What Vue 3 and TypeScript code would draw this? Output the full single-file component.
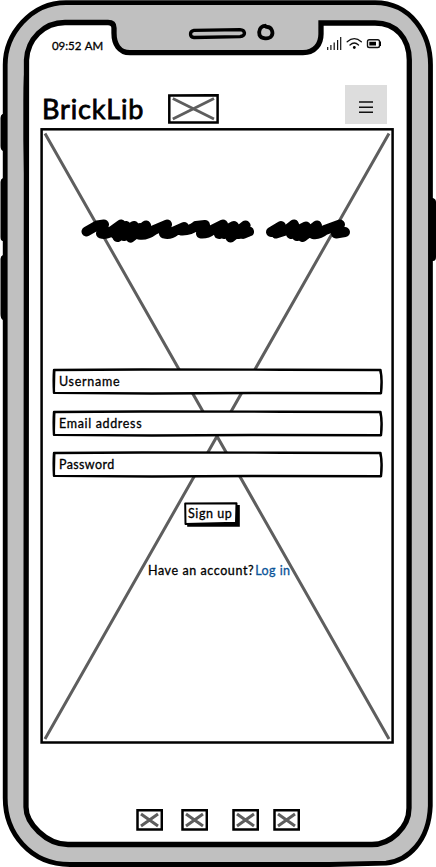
<script setup lang="ts">
interface Field {
  id: string
  label: string
}

const fields: Field[] = [
  { id: 'username', label: 'Username' },
  { id: 'email', label: 'Email address' },
  { id: 'password', label: 'Password' },
]

const tabs: string[] = ['first', 'second', 'third', 'fourth']
</script>

<template>
  <div class="phone">
    <svg class="frame" viewBox="0 0 436 867" fill="none" stroke="#000" aria-hidden="true">
      <path fill="#000" stroke="none" d="M5 114H2.500Q.5 115 .5 118V146Q.5 150 3 151H5ZM5 178H3Q.5 179 .5 182V237Q.5 241 3 241H5ZM5 255H3Q.5 256 .5 259V314Q.5 319 3 320H5ZM429 198H433Q436 199 436 202V257Q436 261 433 261H429Z" />
      <path fill="#c0c0c0" stroke-width="4.800" d="M5.200 65C5.200 34 31 2.600 66 2.600H375C411 2.600 430.500 34 430.500 65L430.300 806C429 841 408 861 386 863.200L330 864.500H70C30 864.500 5.200 833 5.200 798Z" />
      <path fill="#fff" stroke-width="5.300" d="M26.500 60C27.500 39 44 22.500 65 22.500H108Q114 22.500 114 28V33C114 44 119 52.700 130 52.700H303C315 52.700 321 44 321 34V23H375C396 23 409 38 409.300 60L409 808C409 828 390 844.500 372 844.500H68C46 844.500 26 823 26 807Z" />
      <path stroke-width="2.400" d="M26.500 58Q24.600 75 24.600 100V140L25.500 190M26 795V807Q28 820 38 830" />
      <path stroke-width="3.300" d="M194 30.300Q190.500 31 190.500 34Q190.500 37.300 194 37.500L240 36.700Q244.500 36 244.500 33Q244 30 240 29.700Z" />
      <path stroke-width="3.800" d="M265 25.800C260 26 258.500 31 259.500 35C261 39 269 39.500 271.500 36C274 32 271 27 267.500 27Q266 27 265 25.800Z" />
    </svg>

    <div class="screen">
      <div class="status">
        <span class="clock">09:52 AM</span>
        <svg class="indicators" viewBox="0 0 56 16" fill="none" stroke="#111" aria-hidden="true">
          <path stroke-width="1.200" d="M1.700 11V14M4.900 9V14M8.200 6.500V14M11.600 4V14M14.700 1V14" />
          <path stroke-width="1.300" stroke-linecap="round" d="M21.200 5.800Q28.300-.5 35.300 5.800M24 9Q28.300 5 32.500 9" />
          <circle cx="28.300" cy="11.500" r="1.400" fill="#000" stroke="none" />
          <rect x="41.500" y="3.700" width="12" height="7.800" rx="1.800" stroke-width="1.400" />
          <path fill="#000" stroke="none" d="M43.300 5.700H50V9.500H43.300ZM53.500 5.500H55V10H53.500Z" />
        </svg>
      </div>

      <header class="header">
        <h1 class="brand">BrickLib</h1>
        <svg class="logo" viewBox="0 0 51 30" aria-hidden="true">
          <path fill="#fff" stroke="#000" stroke-width="2.500" d="M1.300 1.500L49.600 1.200V28.500L1.300 28.600Z" />
          <path stroke="#5e5e5e" stroke-width="2.800" d="M4.800 4.500L46 25M46 4.500L4.800 25" />
        </svg>
        <button class="menu" type="button" aria-label="Menu">
          <svg viewBox="0 0 14 12" aria-hidden="true">
            <path stroke="#111" stroke-width="1.400" d="M0 1H14M0 6.200H14M0 11.200H14" />
          </svg>
        </button>
      </header>

      <main class="hero">
        <svg class="cross" viewBox="0 0 354 616" fill="none" aria-hidden="true">
          <path stroke="#5e5e5e" stroke-width="3" d="M5 5.500L349 611M349 5.500L5 611" />
          <rect x="1.600" y="1.300" width="351" height="613.200" stroke="#000" stroke-width="2.500" />
        </svg>
        <svg class="scribble" viewBox="80 216 272 30" fill="none" stroke="#000" stroke-width="10" stroke-linecap="round" stroke-linejoin="round" aria-hidden="true">
          <path d="M86.500 231.500L97 225.500L104 224.500L101 233.500Q106 235 112 231L121 224.500L115 234L126 226L117.500 237L134 226L124 236L140 228L130.500 237.500L146 225.500L139 234.500Q146 236 154 230L167 224.500L164 233.500Q170 235 175 231L184 227L181 230.500Q190 231 196 226L205 225L201 233.500Q207 234 212 230L223 224.500L219 234L234 226L224 234L240 229L230.500 237.500L245.500 225.500L238 234L249 231.500L243 234" />
          <path d="M271 232L281 226L276 233.500L287 230L294 224.500L291 234L306 226.500L297 236L312 230L302.500 237L317 225.500L313 234Q319 235 325 230L340 224.500L336 233.500L345 232" />
        </svg>

        <form class="form" @submit.prevent>
          <div v-for="field in fields" :key="field.id" class="field">
            <svg class="sketch" viewBox="0 0 331 27" aria-hidden="true">
              <path fill="#fff" stroke="#000" stroke-width="2.400" stroke-linejoin="round" d="M2 2L90 1.500L230 1.700L328.500 2Q330.500 12 329 25.200L200 25L100 25.500L2 24.900Q1.300 12 2 2Z" />
              <path fill="none" stroke="#000" stroke-width="1.300" d="M2.800 2L2.300 25.500M328 2.500L329.500 12.500L328.500 25.500" />
            </svg>
            <span class="label" :class="field.id">{{ field.label }}</span>
          </div>
          <button class="submit" type="submit">
            <svg class="sketch" viewBox="0 0 57 25" aria-hidden="true">
              <path d="M3.500 3H55.800V24.800H3.200Z" />
              <path fill="#fff" stroke="#000" stroke-width="2" stroke-linejoin="round" d="M1.200 1.500L52.500 1.200L52 20.800L1.500 22Z" />
            </svg>
            <span class="label">Sign up</span>
          </button>
        </form>

        <p class="login"><span class="question">Have an account?</span><a class="link">Log in</a></p>
      </main>

      <nav class="tabs">
        <svg v-for="tab in tabs" :key="tab" class="tab" :class="tab" viewBox="0 0 27 22" aria-hidden="true">
          <path fill="#fff" stroke="#000" stroke-width="2.500" d="M1.500 1.300H25.800V20.600H1.500Z" />
          <path stroke="#5e5e5e" stroke-width="3" d="M5 5L22 17M22 5L5 17" />
        </svg>
      </nav>
    </div>
  </div>
</template>

<style>
body {
  background: #fff;
}
</style>

<style scoped>
.phone {
  position: relative;
  width: 436px;
  height: 867px;
  overflow: hidden;
  color: #000;
  font-family: Lato, "Open Sans", sans-serif;
  font-size: 12.5px;
  line-height: 16px;
  letter-spacing: 0.58px;
  -webkit-text-stroke: 0.3px currentColor;
}

.frame {
  position: absolute;
  inset: 0;
  width: 436px;
  height: 867px;
}

.screen {
  position: relative;
  display: flex;
  flex-direction: column;
  height: 867px;
  box-sizing: border-box;
  padding: 36px 42px 36px 40px;
}

.status {
  display: flex;
  justify-content: space-between;
  height: 49px;
  padding: 0 12px;
}

.clock {
  margin-top: 2px;
  font-size: 11.5px;
  word-spacing: 1px;
  letter-spacing: -0.05px;
  white-space: nowrap;
}

.indicators {
  width: 56px;
  height: 16px;
}

.header {
  display: flex;
  height: 43px;
  padding-right: 7px;
}

.brand {
  width: 127px;
  margin: 8px 0 0 2px;
  font-size: 27px;
  font-weight: 400;
  line-height: 32px;
  letter-spacing: 0.85px;
  -webkit-text-stroke: 0.8px #000;
}

.logo {
  width: 51px;
  height: 30px;
  margin: 9px 0 0 -1px;
}

.menu {
  display: grid;
  place-items: center;
  width: 42px;
  height: 39px;
  margin-left: auto;
  padding: 4px 0 0;
  border: 0;
  background: #ddd;
}

.menu svg {
  width: 14px;
  height: 12px;
}

.hero {
  position: relative;
  width: 354px;
  height: 616px;
  box-sizing: border-box;
  padding: 88px 11px 0 12px;
}

.cross {
  position: absolute;
  top: 0;
  left: 0;
  width: 354px;
  height: 616px;
}

.scribble {
  position: relative;
  display: block;
  width: 272px;
  height: 30px;
  margin-left: 28px;
}

.form {
  position: relative;
  display: flex;
  flex-direction: column;
  gap: 14.5px;
  margin-top: 122px;
}

.field {
  position: relative;
  width: 331px;
  height: 27px;
  box-sizing: border-box;
  padding: 6px 7px;
}

.sketch {
  position: absolute;
  inset: 0;
  width: 100%;
  height: 100%;
}

.label {
  position: relative;
  display: block;
  white-space: nowrap;
}

.label.username {
  letter-spacing: 0.72px;
}

.label.email {
  letter-spacing: 0.66px;
}

.label.password {
  letter-spacing: 0.38px;
}

.submit {
  position: relative;
  width: 57px;
  height: 25px;
  margin: 9.5px 0 0 132px;
  padding: 0 0 1px 4px;
  border: 0;
  background: none;
  color: #000;
  font: inherit;
  letter-spacing: inherit;
  text-align: left;
}

.login {
  position: relative;
  display: flex;
  gap: 1px;
  margin: 36px 0 0 96px;
  white-space: nowrap;
}

.link {
  color: #0b5599;
  letter-spacing: 0.45px;
}

.tabs {
  display: flex;
  margin: 65px 0 0 96px;
}

.tab {
  width: 27px;
  height: 22px;
  margin-right: 18px;
}

.second {
  margin-right: 24px;
}

.third {
  margin-right: 14px;
}
</style>
